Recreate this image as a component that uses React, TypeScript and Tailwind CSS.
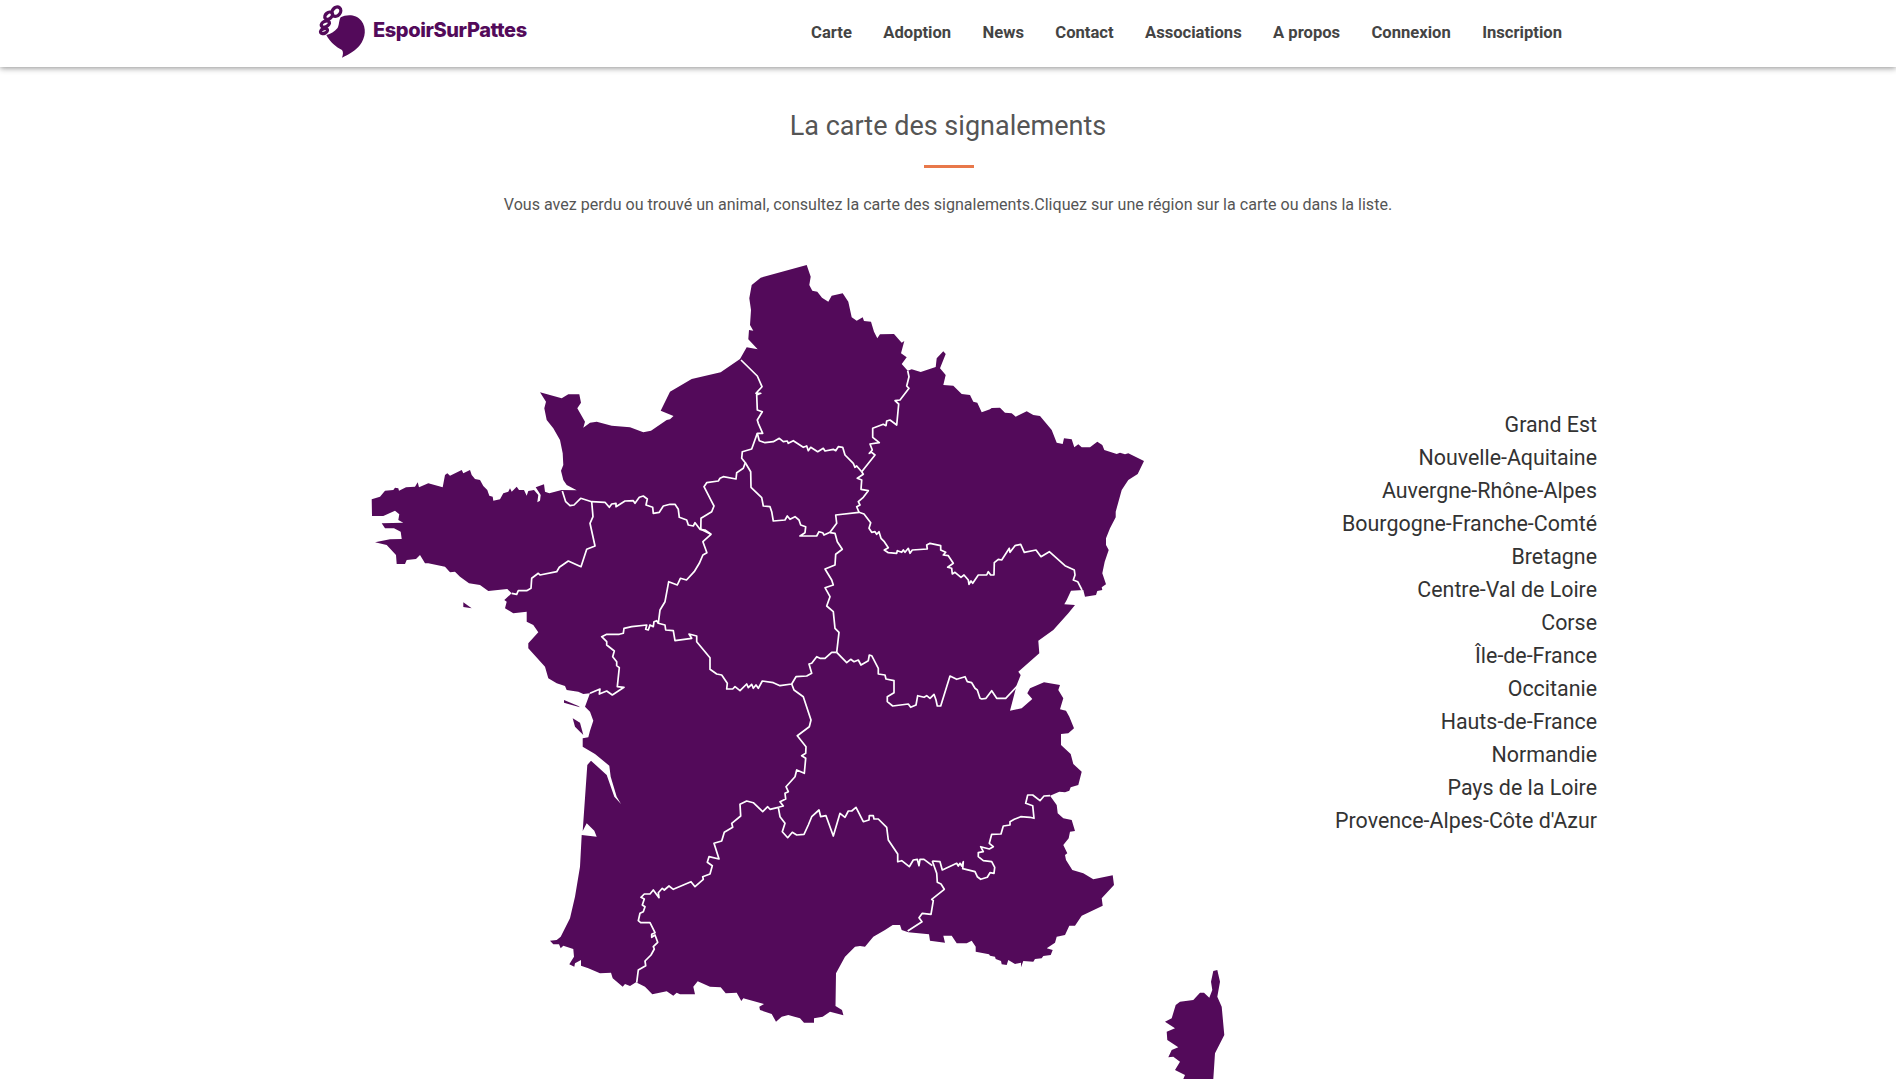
const NAV = ["Carte", "Adoption", "News", "Contact", "Associations", "A propos", "Connexion", "Inscription"];

const REGIONS = [
  "Grand Est",
  "Nouvelle-Aquitaine",
  "Auvergne-Rhône-Alpes",
  "Bourgogne-Franche-Comté",
  "Bretagne",
  "Centre-Val de Loire",
  "Corse",
  "Île-de-France",
  "Occitanie",
  "Hauts-de-France",
  "Normandie",
  "Pays de la Loire",
  "Provence-Alpes-Côte d'Azur",
];

// mainland silhouette, coordinates are page pixels
const MAINLAND =
  "806.7,265 810.7,276.7 809.3,285 812.3,290.7 817.3,291.7 822,297.7 828.3,301.7 831.7,295.7 842.7,293.3 848.3,301.7 851.7,317.3 856.7,320.7 862.7,317.3 864,321 871,321.7 874,331.7 877.3,338.3 880,334.3 894,334 901.7,342.7 904.3,341 901,353.3 906.7,357.3 901.7,364 907.7,370.7 911.7,369.3 920.7,372 935.7,367 936.7,358.3 943.3,351.3 945.7,354 940,368.3 945.7,375 943.3,385 953.3,385.7 961.7,394 970,395 973.3,401.7 977.3,402.7 981.7,412.3 990,409.3 991.7,408 1000,407.7 1005,412.7 1011.7,413.3 1015.7,416.7 1026.7,411.3 1033.3,415 1040,416 1046.7,424 1051.7,430 1056.7,442.7 1062.7,444 1064,438.3 1071.7,439.3 1074.3,447.3 1078.3,444.3 1081.7,447.3 1090,447.3 1097.3,441.7 1102.3,445 1104.3,450 1116.7,454 1120,452.7 1125,454.3 1128.3,453.3 1144,461 1137.7,474 1128.3,480 1121.7,490 1115.7,511.7 1115.7,517.3 1110,528.3 1106,538.3 1106,545 1108.7,550 1104.7,561.7 1102.3,573.3 1106,584.3 1101.7,587.3 1102.3,590 1097.3,591 1096,595 1085,596.7 1083.3,590 1071,590.7 1066.7,600 1064.3,604.3 1075,605 1068.3,613.3 1053.3,630 1038.3,640.7 1039.3,653.3 1018.3,671.7 1020.7,675 1016.7,685 1010,710.7 1021.7,708.3 1032.3,699 1027.3,693.3 1030,688.3 1044,682.3 1060,685 1058.3,690 1063.3,698.3 1060,709.3 1066,710.7 1069.3,716.7 1074,728.3 1068.3,733.3 1061,734 1061,745 1070.7,754 1073.3,764 1081.7,771.7 1078.3,785 1070.7,787.3 1069.3,790.7 1065,792.3 1059.3,791.7 1050,795.7 1056.7,805 1057.7,813.3 1063.3,818.3 1071.7,820 1075,831 1070,831.7 1068.7,838.3 1063.3,845 1067.3,853.3 1065,855 1066,860 1072.3,870 1083.3,873.3 1093.3,879.3 1112.7,875.3 1114,885 1101.7,898.3 1102.7,905.7 1081.7,915.7 1075,925.7 1069.3,925.7 1065,935 1056.7,936.7 1055,942.7 1046.7,948.3 1052.7,950 1050.7,955 1043.3,956 1041.7,958.3 1035,959 1033.3,961.7 1023.3,961 1021,967.3 1021,962.7 1015,964 1008.3,960 1006.7,965 1001.7,964.3 1001,961 995.7,959 995,956.7 990,955.7 989,954.3 975.7,951.7 975.7,946.7 971.7,940.7 966.7,943.3 956.7,943.3 951.7,935.7 943.3,935.7 945,942.7 930,940.7 929,934.3 908.3,932.3 901.7,930 900,925 892.7,925 885,930 873.3,936.7 865,946.7 860,946 855,946.7 845,956.7 836,973.3 835.5,1006 842,1010 843.4,1015.3 830,1011.7 822.7,1016.7 814,1018.3 814,1022.7 804,1022.7 800,1018.3 788.3,1015 781.7,1016.7 776,1021.7 771.7,1014 760,1010 759.3,1006.7 764,1004 743.3,998.3 741.3,1001 736.7,992.7 725.7,993.3 720.7,987.3 710,986.7 697.7,981.3 693.3,986.7 695,994.3 680,994.3 676.7,992.7 673.3,995.7 666.7,991.3 652.3,994.3 645,986.7 636,982.3 630,986 625,984 622.7,986.7 612.7,978.3 611,972.7 600,973.3 588.3,968.3 581,965.7 581,960 575,963.3 574.3,966.7 569.3,964.3 574,956.7 573.3,949 563.3,945.7 560.7,948.3 559,944.3 553.3,944.3 550,940.7 556.7,940 560.7,936.7 570,918.3 575,896.7 580,866.7 581.7,835 596.7,836.7 594.3,830.7 586.7,823.3 582.7,831 587.3,765 591,760.7 606.7,775 614.3,796.7 621,804 616.7,796.7 610.7,776.7 609.3,765.7 595,754 582.7,746.7 582.7,738.3 588.3,737.3 590,730.7 593.3,720.7 590,711.7 585,706.7 590,693.3 583.3,694 578.3,691.7 566.7,690 565,686 556.7,683.3 548.3,678.3 545,666.7 528.3,648.3 528.3,643.3 538.3,632.3 533.3,625 526.7,621.7 526.7,611.7 513.3,613.3 505,608.3 506.7,601.7 504.3,600 511.7,593.3 507.3,589 488.3,591 480,585 469,583.3 460,576.7 455,571.7 450,572.3 445,566.7 428.3,563.3 425,563.3 420,555 416,559 406.7,560 405,564 396.7,564 396,555 386.7,545 375,542.3 390,539.3 401.7,539 400.7,531.7 394,528.3 385,528.3 381.7,523.3 403.3,522.7 398.3,520 399.3,514.3 395,510.7 383.3,516 372,516 371.7,499.3 380,496.7 385,490.7 393.3,490 395,487.7 398.3,488.3 399,490.7 406,487.3 415,486.7 417.7,482.3 419,487.3 428.3,483.3 442.7,487.3 445,475 447.3,473.3 450,475.7 461.7,470 463.3,473.3 470,470 471.7,475 475,479 480,480 483.3,486 487.3,490 489.3,495.7 492.7,496.7 493.3,500.7 500,499.3 503.3,493.3 508.3,491.7 510,488.3 511.7,491.7 516.7,486.7 519,490 524,490 526.7,495.7 528.3,491 534,490 538.3,495 537.3,502.3 540,500.7 540.7,495 535.7,487.3 544,484.3 545,491.7 549.3,493.3 561.7,490 576.7,490.3 566.7,485 563.3,480 561,470.7 563.3,465 562.7,453.3 560,440 553.3,428.3 546.7,420 544.3,408.3 546,401.7 540,392.3 561.7,398.3 568.3,394.3 579.3,394.3 581,402.7 577.3,408.3 585,421.7 583.3,427.7 590,422.7 596.7,421.7 611.7,425.7 630,427.3 643.3,432.3 651,430.7 666.7,420 670,419.3 673.5,416 660.7,410.7 670,391.7 691.7,379 720.7,372.3 740,359 746.7,347.3 757.7,349.3 748.3,339.3 749,330 753.3,330.7 750,325 751,310 749.3,298.3 751.7,285 760.7,277.7";

const CORSE =
  "1213.3,971 1217.3,970 1220,981.7 1217.3,996.7 1221.7,1006.7 1224.3,1035 1215,1053.3 1213.3,1079 1212,1120 1190,1110 1183.3,1079 1185,1075 1175,1070 1180,1061.7 1173.3,1056.7 1168.3,1057.3 1171.7,1050 1178.3,1047.3 1167.3,1040 1166.7,1031.7 1175,1028.3 1165,1021.7 1171.7,1018.3 1175.7,1005 1180,1001.7 1193.3,1000 1200,992.7 1204,992.7 1209.3,997.7 1212.3,990 1211,981.7";

const ISLANDS = [
  "564,700 578.3,706 580,707.3 568.3,704 564,702.7",
  "572.7,718.3 580,722.7 583.3,735 575,726.7",
  "463.3,602.3 471.7,608.3 463.3,607",
];

// region borders, drawn in white over the silhouette
const BORDERS = [
  "562.3,491 565.7,501.7 570,505.7 574,505 580.7,498.3 591.7,501.7 605,502.3 609.3,507.3 611.7,504 616,503.3 616,506.7 625,501 633.3,500.7 635,503.3 639.3,497.3 643.3,496 647.3,499 646,505 652.7,507.3 653.3,513.3 659.3,512.3 663.3,506 670,504.3 675,504.3 678.3,509.3 679.3,517.3 686.7,520 688.3,525 693.3,526 695,522.7 700,529.3 705,530 711,534.3",
  "700.8,529.3 701,518.3 711.7,511.7 714,506 711.7,501.7 704,486.7 706.7,482.7 718.3,481 720,478.3 723.3,476.7 736,479 736.7,472.7 743.3,468.3 745.3,462.7 741.7,458.3 742.3,451.7 751.7,449 757.3,433.3 762.7,433.3 758.3,423.3 757.3,420 762.3,411.7 757.3,410 756.7,395 760.7,393.3 756,393.3 762,386.7 757.3,376 741,360",
  "757.3,433.3 759.3,440.7 765,442.7 773.3,441.7 779.3,438.3 783.3,441.7 787.3,441 788.3,443.3 793.3,440.7 803.3,447.3 806.7,446 808.3,450.7 810.7,447.3 817.7,451.7 823.3,448.3 825,451 833.3,449.3 835.7,450.7 838.3,446.7 842.7,447.3 845,455 853.3,463.3 855,467.3 856.7,466 861.7,471.7",
  "861.7,471.7 875,455 871.7,452.3 869.3,453.3 872.3,450 870,444 879.3,442.7 872.7,437.3 872.7,428.3 883.3,424.3 886,425.7 886.7,421 890,420 896.7,425 898.7,404 895,400.7 900,400 909,388.3 906.7,386 909,376.7 907.7,370.7",
  "861.7,471.7 863.3,474.3 857.3,478.3 861.7,480 861,489.3 868.3,490.7 863.3,497.3 858.3,501.7 860,505 856.7,506.7 859,512.3",
  "745.3,462.7 750.7,471.7 751,487.3 761.7,497.7 763.3,506 770,506.7 771.7,511.7 773.3,521 785,520 787.3,516 790,519.3 795,516.7 799,520 800.7,525 805.7,526.7 805,532.7 800,536 816.7,536 819,531.7 822.7,532.7 824,535 830,532.3 836.7,523.3 835.7,515 859,512.3",
  "859,512.3 864,514 870.7,522.7 869,528.3 871.7,532.3 875,531.7 876.7,534.3 879,531.7 881,538.3 884.3,541.7 888.3,547.7 884.3,550 888.3,552.7 896.7,553.3 897.3,550.7 901.7,552.3 903.3,550 905,552.3 908.3,548.3 910,553.3 912.3,550 927.3,549 926.7,545 930,543.3 940.7,545.7 940.7,550 945.7,552.3 943.3,555 948.3,555.7 953.3,563.3 947.7,567.3 951.7,568.3 952.3,574 955,572.3 961,577.3 964,575 968.3,580 969,584.3 971,581 972.7,583.3 978.3,575 986.7,575 988.3,571.7 990.7,575 994,575 994.3,562.7 998.3,559.3 1001.7,560 1009.3,548.3 1010,552.3 1015,545.7 1020.7,544.3 1024.3,552.3 1036,550 1041,556.7 1049.3,551.7 1065,565.7 1074.3,570 1075,575 1073.3,580 1077.7,581.7 1082,590",
  "830,532.7 835,533.3 837.3,541.7 842.3,549.3 835.7,554.3 835,565 825,569 831.7,580 833.3,585 825,587.7 830,596.7 826.7,606 833.3,611.7 835,628.3 839,632.3 836.7,652.3",
  "836.7,652.3 846.7,662.7 850.7,659.3 854,661.7 858.3,660 861,665 868.3,660.7 869.3,655 871.7,655.7 878.3,668.3 878.3,674 885,675 886,679 894,680.7 894,692.7 887.3,696.7 887.3,701.7 892.7,706 908.3,704 910.7,707.3 916,705 917.7,695.7 924,697.3 926.7,695.7 930,698.3 934,694.3 936,700 937.3,706 940.7,706 950,676 956.7,679.3 965,676.7 967.3,681.7 971.7,682.7 975,688.3 977.3,690 980,698.3 981.7,699 986,698.3 991.7,690.7 996.7,698.3 1005.7,698.3 1017.3,686",
  "836.7,652.3 831.7,652.3 825,658.3 820,658.3 816.7,656.7 811.7,663.3 809,664 811.7,673.3 806.7,676 796,676.7 791.7,684 780,685.7 773.3,682.7 762.3,681 758.3,688.3 756,685 753.3,688.3 751.7,684.3 748.3,687.7 746.7,684 740,690.7 735,686.7 732.7,689 726.7,689 727.3,683.3 721.7,675 716.7,674 710,669.3 710,657.7 696.7,641.7 696.7,636 689,634 691.7,638.3 675,640.7 673.3,630.7 665.7,630 665,625 658.3,623.3 656.7,620.7 654,621.7 653.3,626.7 650,625 648.3,630 645.7,629.3 646.7,625 631.7,626.7 624,628.3 623.3,633.3 619.3,634.3 606.7,634.3 601.7,636.7 606.7,641.7 606.7,645 614.3,651 612.7,656.7 616.7,661.7 616.7,665.7 619.3,667.7 617.3,686.7 624,687.3 612.3,695 606.7,691 599.3,694 600,689 590,693.3",
  "658.3,623.3 660,610 665,601.7 668.7,581.7 677.3,585 680.4,578.3 686.5,580 694.2,571.7 699.3,563.3 702.9,555 706.9,552.7 702.9,541.7 711,534.3 700.8,529.3",
  "591.7,501.7 593,516.7 590,523.3 595,546 586.7,549.3 581,566.7 568.3,561 559.3,567.3 556.7,571.7 540,575 538.3,573.3 531.7,578.3 531,588.3 526.7,590.7 518.3,590.7 516.7,594.3 511.7,593.3",
  "791.7,684 794,690 803.3,696.7 811,720 809.3,726.7 797.3,735.7 806,746.7 805.7,753.3 801.7,755.7 805.7,758.3 804.3,773.3 796.7,770 795,776.7 786,786.7 788.3,791.7 785,793.3 785.7,799 780,801.7 783.3,806 778.3,807.3",
  "778.3,807.3 770,809.3 767.7,806.7 762.7,811.7 753.3,802.7 746.7,801 740,804.3 740.7,816 731.7,823.3 732.7,827.3 724.3,832.3 721.7,841 714,843.3 719,859 709,856.7 707.3,862.3 712.3,865.7 710,874 702.7,876.7 703.3,879.3 695,886.7 691,881.7 673.3,889.3 669,886 664.3,890 662.3,888.3 658.3,892.7 659,897.7 653.3,890 650,894 644.3,894 641,897.3 644.3,899 642.3,905 645,906.7 643.3,911.7 640,913.3 638.3,920.7 640.7,922.7 650,922.7 655,932.7 651.7,934.3 651.7,937.3 655,935 657.7,942.3 653.3,946.7 654.3,949 651,955 645,961 645.7,965.7 638.3,970 636.7,982.7",
  "778.3,807.3 780,816.7 785,823.3 782.3,831.7 787.7,837.7 792.3,832.3 796.7,835 804,834.3 808.3,825 811.7,816.7 819,810 820.7,816.7 826,815.7 833.3,836 840,813.3 845,817.3 848.3,811 851.7,811 856,807.3 863.3,821.7 869,820 869.3,815.7 873.3,815.7 874,819 878.3,819 886.7,827.3 888.3,840 897.7,854 897.7,861.7 901.7,860.7 909.3,866.7 913.3,860 917.3,859.3 919,865.7 920,859.3 924,859.3 932.3,865.7",
  "932.3,861 936.7,873.3 937.3,882.3 941,884 944.3,889.3 931.7,899.3 933.3,900.7 931,914.3 922.3,913.3 919,917.7 922,921.7 907.7,931",
  "932.3,861 940,861.7 942.3,870 956.7,863.3 958.3,866 960,863.3 961.7,866 963.3,861.7 962.7,868.7 975,871.7 977.3,876.7 980.7,879.3 987.3,877.3 990,872.7 994,873.3 994.7,867.3 991.7,861.7 983.3,860.7 978.3,856.7 978.3,852.7 983.3,851.7 980.7,846.7 989.3,849 993.3,846.7 989.3,843.3 991.7,834.3 1001,834 1003.3,826 1010,825 1010,821.7 1014.3,819.3 1020.7,816.7 1030,817.3 1034,818.3 1032.7,805.7 1025.7,803.3 1027.7,795 1032.7,795 1040,800.7 1044,796 1050,795.7",
];

function Logo() {
  return (
    <svg viewBox="50 15 150 165" className="h-[55px] w-[50px] shrink-0" aria-hidden="true">
      <path
        d="M118 52C135 42 165 42 180 62C196 84 193 112 176 135C163 152 145 162 122 173C126 163 126 155 122 150C105 142 85 125 75 105C88 102 100 95 108 85C114 77 112 62 118 52Z"
        fill="#530a5a"
      />
      <g fill="#fff" stroke="#530a5a" strokeWidth="10">
        <ellipse cx="105" cy="35" rx="12" ry="15" transform="rotate(40 105 35)" />
        <ellipse cx="82" cy="47" rx="9" ry="13" transform="rotate(50 82 47)" />
        <ellipse cx="72" cy="72" rx="13" ry="8" transform="rotate(-25 72 72)" />
        <ellipse cx="68" cy="93" rx="11" ry="7" transform="rotate(-25 68 93)" />
      </g>
    </svg>
  );
}

function FranceMap() {
  return (
    <svg viewBox="370 260 860 860" className="ml-[72px] h-[860px] w-[860px] shrink-0">
      <g fill="#530a5a">
        <polygon points={MAINLAND} />
        <polygon points={CORSE} />
        {ISLANDS.map((p) => (
          <polygon key={p} points={p} />
        ))}
      </g>
      <g fill="none" stroke="#fff" strokeWidth="1.7" strokeLinejoin="round">
        {BORDERS.map((p) => (
          <polyline key={p} points={p} />
        ))}
      </g>
    </svg>
  );
}

export default function App() {
  return (
    <div className="h-screen overflow-hidden bg-white font-['Roboto',sans-serif]">
      <header className="h-[67px] bg-white shadow-[0_1px_6px_rgba(0,0,0,0.45)]">
        <div className="mx-auto flex h-full w-[1300px] items-start pl-[20px] pr-[36px]">
          <div className="mt-[5px] flex items-start gap-[5px]">
            <Logo />
            <span className="mt-[13px] font-['Inter',sans-serif] text-[20px] leading-[24px] font-extrabold tracking-[-0.4px] text-[#530a5a]">
              EspoirSurPattes
            </span>
          </div>
          <nav className="ml-auto flex h-full items-center gap-[31.4px]">
            {NAV.map((item) => (
              <a key={item} className="text-[16.6px] font-bold text-[#444]">
                {item}
              </a>
            ))}
          </nav>
        </div>
      </header>

      <main className="mx-auto w-[1300px]">
        <h1 className="mt-[40px] text-center text-[27px] leading-[38px] font-normal text-[#555]">
          La carte des signalements
        </h1>
        <div className="mx-auto mt-[20px] h-[3px] w-[50px] translate-x-px bg-[#e8784a]" />
        <p className="mt-[26px] text-center text-[16.07px] leading-[22px] text-[#555]">
          Vous avez perdu ou trouvé un animal, consultez la carte des signalements.Cliquez sur une région sur la carte ou dans la liste.
        </p>

        <div className="mt-[44px] flex">
          <FranceMap />
          <ul className="ml-auto mt-[148px] pr-[1px] text-right text-[21.4px] leading-[33px] text-[#333]">
            {REGIONS.map((r) => (
              <li key={r}>{r}</li>
            ))}
          </ul>
        </div>
      </main>
    </div>
  );
}
